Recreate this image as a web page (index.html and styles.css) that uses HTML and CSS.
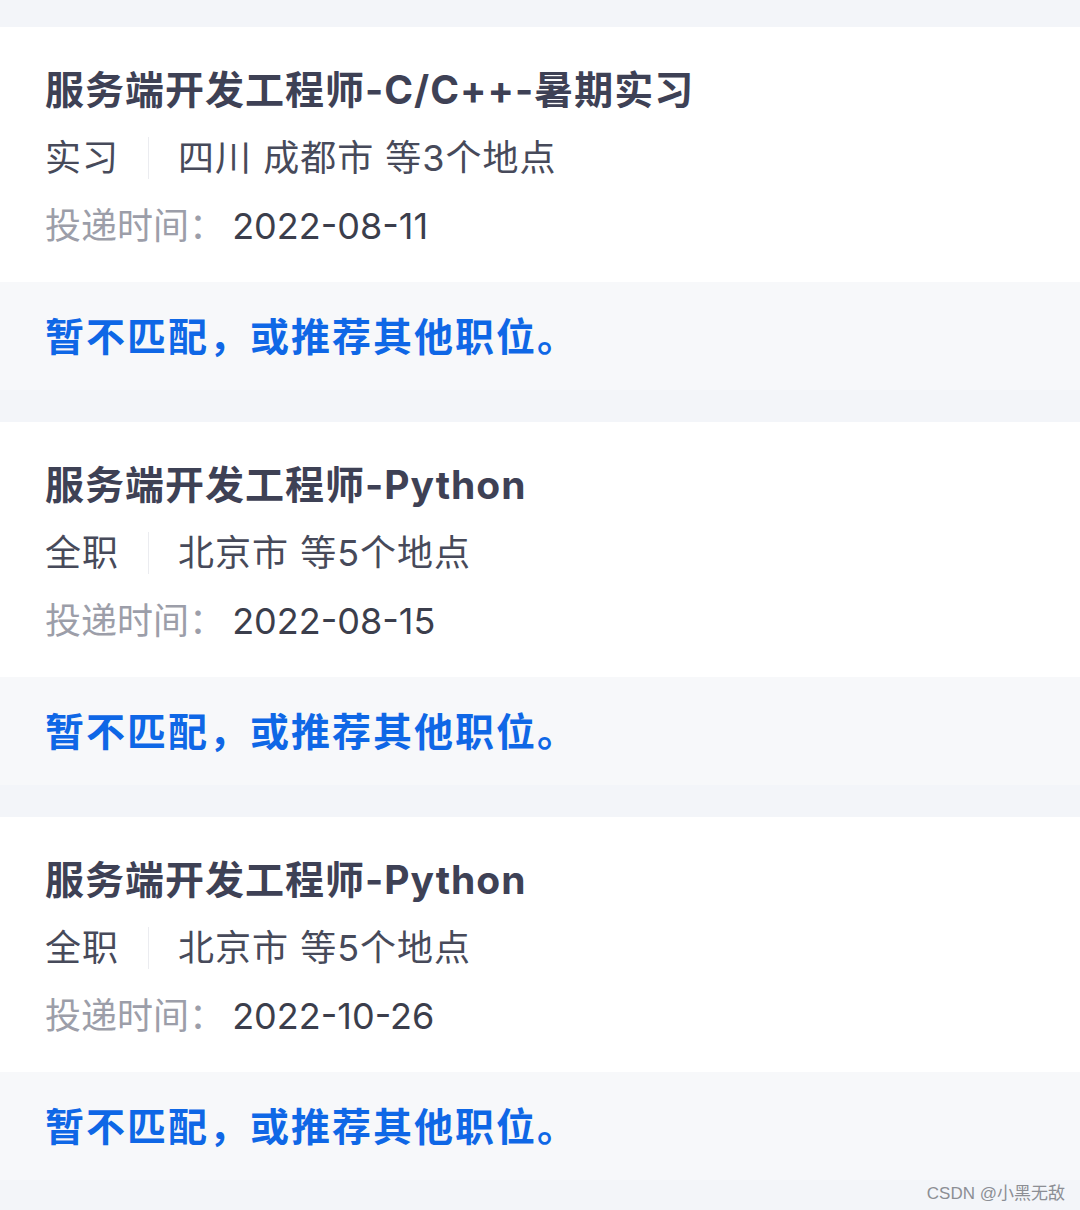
FILE: index.html
```html
<!DOCTYPE html>
<html lang="zh-CN">
<head>
<meta charset="UTF-8">
<meta name="viewport" content="width=device-width, initial-scale=1.0">
<title>投递记录</title>
<link rel="stylesheet" href="styles.css">
</head>
<body>
<div class="list">
    <div class="job">
        <div class="job-info">
            <h3 class="job-title">服务端开发工程师-C/C++-暑期实习</h3>
            <div class="job-meta">
                <span class="job-type">实习</span>
                <span class="job-city">四川 成都市 等3个地点</span>
            </div>
            <div class="job-date">
                <span class="label">投递时间：</span>
                <span class="date">2022-08-11</span>
            </div>
        </div>
        <div class="job-status">暂不匹配，或推荐其他职位。</div>
    </div>

    <div class="job">
        <div class="job-info">
            <h3 class="job-title">服务端开发工程师-Python</h3>
            <div class="job-meta">
                <span class="job-type">全职</span>
                <span class="job-city">北京市 等5个地点</span>
            </div>
            <div class="job-date">
                <span class="label">投递时间：</span>
                <span class="date">2022-08-15</span>
            </div>
        </div>
        <div class="job-status">暂不匹配，或推荐其他职位。</div>
    </div>

    <div class="job">
        <div class="job-info">
            <h3 class="job-title">服务端开发工程师-Python</h3>
            <div class="job-meta">
                <span class="job-type">全职</span>
                <span class="job-city">北京市 等5个地点</span>
            </div>
            <div class="job-date">
                <span class="label">投递时间：</span>
                <span class="date">2022-10-26</span>
            </div>
        </div>
        <div class="job-status">暂不匹配，或推荐其他职位。</div>
    </div>
</div>
<div class="watermark">CSDN @小黑无敌</div>
</body>
</html>
```

FILE: styles.css
```css
body {
    font-family: Inter, "Noto Sans CJK SC", sans-serif;
    background-color: #f3f5f9;
    margin: 0;
    padding-top: 27px;
    height: 1210px;
    box-sizing: border-box;
    position: relative;
    overflow: hidden;
}
.list {
    display: flex;
    flex-direction: column;
    gap: 32px;
}
.job-info {
    background-color: #fff;
    padding: 36px 45px 30px;
    height: 255px;
    box-sizing: border-box;
}
.job-title {
    margin: 0;
    font-size: 39px;
    line-height: 54px;
    font-weight: 700;
    letter-spacing: 1px;
    color: #3e4155;
}
.job-meta {
    margin-top: 14px;
    display: flex;
    align-items: center;
    font-size: 36px;
    line-height: 54px;
    letter-spacing: 1px;
    color: #474a5a;
}
.job-city {
    margin-left: 29px;
    padding-left: 29px;
    border-left: 1px solid #ebecf0;
    line-height: 42px;
}
.job-date {
    margin-top: 14px;
    font-size: 36px;
    line-height: 54px;
}
.job-date .label {
    color: #9c9ea9;
}
.job-date .date {
    color: #3b3e4c;
    margin-left: -3px;
}
.job-status {
    background-color: #f7f8fa;
    height: 108px;
    padding: 0 45px 5px;
    box-sizing: border-box;
    display: flex;
    align-items: center;
    font-size: 39px;
    letter-spacing: 2px;
    font-weight: 700;
    color: #0f67e6;
}
.watermark {
    position: absolute;
    right: 15px;
    bottom: 6px;
    font-family: "Liberation Sans", "Noto Sans CJK SC", sans-serif;
    font-size: 17px;
    color: #8c8e94;
}
```
